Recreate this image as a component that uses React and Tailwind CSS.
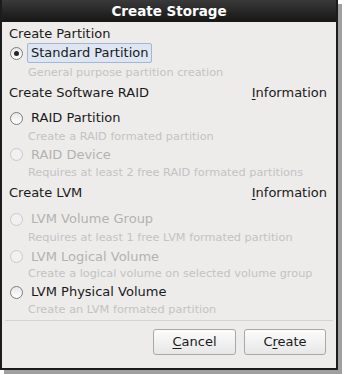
function Radio({ checked, disabled }) {
  return (
    <span
      className={`flex h-[13px] w-[13px] shrink-0 items-center justify-center rounded-full border ${
        disabled ? 'border-[#cacaca] bg-[#f1f1f1]' : 'border-[#7d7d7d] bg-gradient-to-b from-[#e8e8e8] to-white'
      }`}
    >
      {checked && <span className="h-[5px] w-[5px] rounded-full bg-[#262626]" />}
    </span>
  );
}

function Option({ label, desc, checked, disabled, focused, rowH, descH }) {
  return (
    <div>
      <div className={`flex items-center gap-[4px] pl-[8px] ${rowH}`}>
        <Radio checked={checked} disabled={disabled} />
        <span
          className={`whitespace-nowrap px-[3px] text-[13px] leading-[18px] ${disabled ? 'text-[#b2b2b2]' : 'text-[#1a1a1a]'} ${
            focused ? 'rounded-[2px] border border-[#a2b7d4] bg-[#dde6f2]' : 'border border-transparent'
          }`}
        >
          {label}
        </span>
      </div>
      <div className={`flex items-center whitespace-nowrap pl-[26px] text-[11.3px] text-[#c3c3c3] ${descH}`}>{desc}</div>
    </div>
  );
}

function Section({ title, info, h }) {
  return (
    <div className={`flex items-start justify-between whitespace-nowrap pl-[7px] pr-[9px] text-[13px] leading-[18px] text-[#1a1a1a] ${h}`}>
      <span>{title}</span>
      {info && (
        <span>
          <span className="underline underline-offset-2">I</span>nformation
        </span>
      )}
    </div>
  );
}

export default function App() {
  return (
    <div className="h-[375px] w-[344px] bg-white font-['DejaVu_Sans',sans-serif]">
      <div className="flex h-[370px] w-[338px] flex-col border-x-2 border-b-2 border-[#1c1c1c] bg-[#edeceb] shadow-[4px_4px_0_#a0a0a0]">
        <div className="flex h-[22px] shrink-0 items-center justify-center bg-gradient-to-b from-[#3a3a3a] to-[#161616] text-[13.5px] font-bold text-white">
          Create Storage
        </div>
        <div className="h-[3px]" />
        <Section title="Create Partition" h="h-[18px]" />
        <Option label="Standard Partition" desc="General purpose partition creation" checked focused rowH="h-[20px]" descH="h-[20px]" />
        <div className="h-[1px]" />
        <Section title="Create Software RAID" info h="h-[24px]" />
        <Option label="RAID Partition" desc="Create a RAID formated partition" rowH="h-[20px]" descH="h-[18px]" />
        <Option label="RAID Device" desc="Requires at least 2 free RAID formated partitions" disabled rowH="h-[17px]" descH="h-[20px]" />
        <div className="h-[1px]" />
        <Section title="Create LVM" info h="h-[25px]" />
        <Option label="LVM Volume Group" desc="Requires at least 1 free LVM formated partition" disabled rowH="h-[20px]" descH="h-[18px]" />
        <Option label="LVM Logical Volume" desc="Create a logical volume on selected volume group" disabled rowH="h-[19px]" descH="h-[17px]" />
        <Option label="LVM Physical Volume" desc="Create an LVM formated partition" rowH="h-[18px]" descH="h-[18px]" />
        <div className="mx-[3px] mt-[1px] border-t border-[#d4d4d4]" />
        <div className="flex justify-end gap-[8px] pr-[10px] pt-[8px]">
          <button className="h-[26px] w-[83px] rounded-[3px] border border-[#a8a8a8] bg-gradient-to-b from-[#fcfcfc] to-[#e7e7e7] text-[13px] text-[#1a1a1a]">
            <span className="underline underline-offset-2">C</span>ancel
          </button>
          <button className="h-[26px] w-[82px] rounded-[3px] border border-[#a8a8a8] bg-gradient-to-b from-[#fcfcfc] to-[#e7e7e7] text-[13px] text-[#1a1a1a]">
            C<span className="underline underline-offset-2">r</span>eate
          </button>
        </div>
      </div>
    </div>
  );
}
